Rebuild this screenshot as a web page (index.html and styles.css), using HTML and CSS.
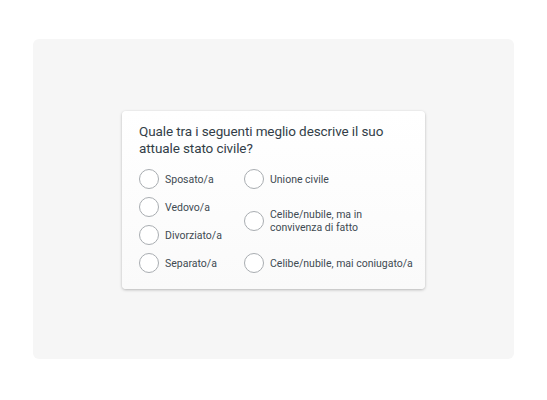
FILE: index.html
```html
<!DOCTYPE html>
<html lang="it">
<head>
<meta charset="utf-8">
<link rel="stylesheet" href="styles.css">
</head>
<body>
<div class="stage">
  <div class="panel">
    <div class="card">
      <div class="question">Quale tra i seguenti meglio descrive il suo attuale stato civile?</div>
      <div class="options">
        <div class="col">
          <label class="opt"><span class="radio"></span><span class="txt">Sposato/a</span></label>
          <label class="opt"><span class="radio"></span><span class="txt">Vedovo/a</span></label>
          <label class="opt"><span class="radio"></span><span class="txt">Divorziato/a</span></label>
          <label class="opt"><span class="radio"></span><span class="txt">Separato/a</span></label>
        </div>
        <div class="col">
          <label class="opt"><span class="radio"></span><span class="txt">Unione civile</span></label>
          <label class="opt tall"><span class="radio"></span><span class="txt">Celibe/nubile, ma in<br>convivenza di fatto</span></label>
          <label class="opt"><span class="radio"></span><span class="txt">Celibe/nubile, mai coniugato/a</span></label>
        </div>
      </div>
    </div>
  </div>
</div>
</body>
</html>
```
FILE: styles.css
```css
html, body {
  margin: 0;
  padding: 0;
  background: #ffffff;
}
.stage {
  width: 547px;
  height: 400px;
  padding: 39px 33px 41px 33px;
  box-sizing: border-box;
}
.panel {
  height: 100%;
  background: #f6f6f6;
  border-radius: 6px;
  display: flex;
  align-items: center;
  justify-content: center;
}
.card {
  width: 303px;
  height: 178px;
  box-sizing: border-box;
  margin-top: 2px;
  background: linear-gradient(#ffffff, #fafafa);
  border-radius: 4px;
  box-shadow: 0 1px 3px rgba(0,0,0,0.25), 0 0 1px rgba(0,0,0,0.08);
  padding: 12px 17px 0 17px;
  font-family: Roboto, "Liberation Sans", sans-serif;
  color: #333e48;
}
.question {
  font-size: 13.5px;
  line-height: 17px;
  letter-spacing: -0.1px;
  color: #333e48;
  width: 260px;
}
.options {
  display: flex;
  margin-top: 12px;
}
.col {
  display: flex;
  flex-direction: column;
  gap: 8px;
}
.col:first-child {
  width: 105px;
  flex: none;
}
.opt {
  display: flex;
  align-items: center;
  height: 20px;
  font-size: 10.5px;
  line-height: 13px;
  color: #404a52;
  white-space: nowrap;
}
.opt.tall {
  height: 48px;
}
.radio {
  width: 18px;
  height: 18px;
  border: 1px solid #a9adb1;
  border-radius: 50%;
  background: #fff;
  flex: none;
  margin-right: 6px;
}
```
